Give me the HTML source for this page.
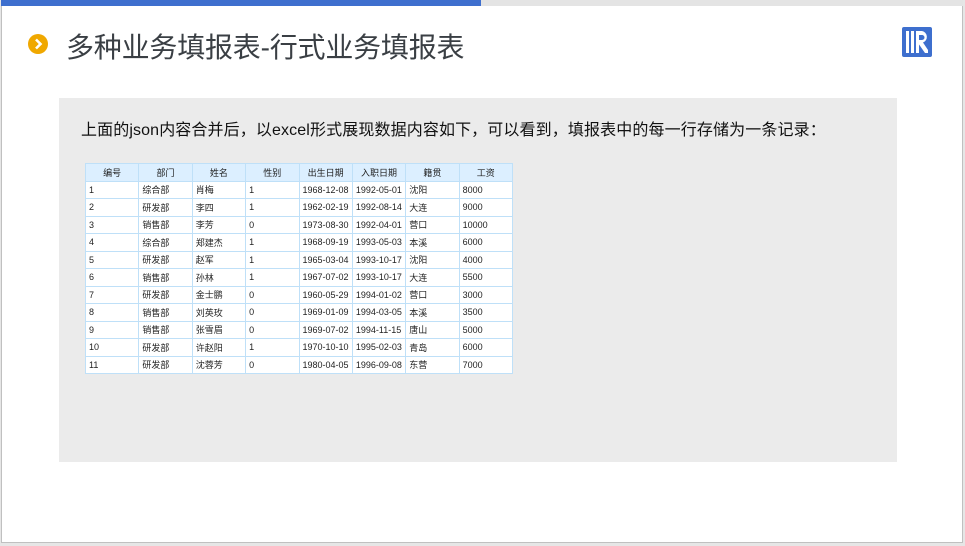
<!DOCTYPE html>
<html><head><meta charset="utf-8"><style>
*{margin:0;padding:0;box-sizing:border-box}
body{width:965px;height:546px;background:#e6e6e6;position:relative;overflow:hidden;font-family:"Liberation Sans","Noto Sans CJK SC",sans-serif}
.slide{position:absolute;left:1px;top:0;width:962px;height:543px;background:#fff;border:1px solid #c0c0c0;border-top:none}
.bar{position:absolute;left:1px;top:0;width:480px;height:6px;background:#3e6fce}
.bar2{position:absolute;left:481px;top:0;width:482px;height:6px;background:#e4e4e4}
.dot{position:absolute;left:28px;top:34px;width:20px;height:20px;border-radius:50%;background:#f0a800}
.title{position:absolute;left:66px;top:26px;font-size:28px;color:#3a3f44;white-space:nowrap;letter-spacing:-0.2px}
.panel{position:absolute;left:59px;top:98px;width:838px;height:364px;background:#ebebeb}
.txt{position:absolute;left:81px;top:116px;font-size:16px;color:#111;white-space:nowrap;letter-spacing:0.12px}
table{position:absolute;left:85px;top:163px;width:428px;table-layout:fixed;border-collapse:collapse;background:#fff;font-family:"Liberation Sans","WenQuanYi Zen Hei",sans-serif;font-size:9px;color:#222}
td{border:1px solid #bfe0f8;height:17.5px;padding:0 3px;white-space:nowrap;overflow:hidden}
tr.h td{background:#dcefff;text-align:center}
</style></head><body>
<div class="slide"></div>
<div class="bar"></div><div class="bar2"></div>
<div class="dot"><svg width="20" height="20" viewBox="0 0 20 20"><path d="M8 5.5 L12.5 10 L8 14.5" stroke="#fff" stroke-width="2.6" fill="none"/></svg></div>
<div class="title">多种业务填报表-行式业务填报表</div>
<svg style="position:absolute;left:902px;top:27px" width="30" height="30" viewBox="0 0 30 30">
<rect x="0" y="0" width="30" height="30" rx="2" fill="#3e6fce"/>
<rect x="4" y="4" width="3" height="22" fill="#fff"/>
<rect x="9" y="4" width="3" height="22" fill="#fff"/>
<path d="M14 4 H20 A6 6 0 0 1 21 15.5 L26 23 V26 H23 L16 16 V13 H20 A2.5 2.5 0 0 0 20 8 H17 V26 H14 Z" fill="#fff"/>
</svg>
<div class="panel"></div>
<div class="txt">上面的json内容合并后，以excel形式展现数据内容如下，可以看到，填报表中的每一行存储为一条记录：</div>
<table>
<tr class="h"><td>编号</td><td>部门</td><td>姓名</td><td>性别</td><td>出生日期</td><td>入职日期</td><td>籍贯</td><td>工资</td></tr>
<tr><td>1</td><td>综合部</td><td>肖梅</td><td>1</td><td>1968-12-08</td><td>1992-05-01</td><td>沈阳</td><td>8000</td></tr>
<tr><td>2</td><td>研发部</td><td>李四</td><td>1</td><td>1962-02-19</td><td>1992-08-14</td><td>大连</td><td>9000</td></tr>
<tr><td>3</td><td>销售部</td><td>李芳</td><td>0</td><td>1973-08-30</td><td>1992-04-01</td><td>营口</td><td>10000</td></tr>
<tr><td>4</td><td>综合部</td><td>郑建杰</td><td>1</td><td>1968-09-19</td><td>1993-05-03</td><td>本溪</td><td>6000</td></tr>
<tr><td>5</td><td>研发部</td><td>赵军</td><td>1</td><td>1965-03-04</td><td>1993-10-17</td><td>沈阳</td><td>4000</td></tr>
<tr><td>6</td><td>销售部</td><td>孙林</td><td>1</td><td>1967-07-02</td><td>1993-10-17</td><td>大连</td><td>5500</td></tr>
<tr><td>7</td><td>研发部</td><td>金士鹏</td><td>0</td><td>1960-05-29</td><td>1994-01-02</td><td>营口</td><td>3000</td></tr>
<tr><td>8</td><td>销售部</td><td>刘英玫</td><td>0</td><td>1969-01-09</td><td>1994-03-05</td><td>本溪</td><td>3500</td></tr>
<tr><td>9</td><td>销售部</td><td>张雪眉</td><td>0</td><td>1969-07-02</td><td>1994-11-15</td><td>唐山</td><td>5000</td></tr>
<tr><td>10</td><td>研发部</td><td>许赵阳</td><td>1</td><td>1970-10-10</td><td>1995-02-03</td><td>青岛</td><td>6000</td></tr>
<tr><td>11</td><td>研发部</td><td>沈蓉芳</td><td>0</td><td>1980-04-05</td><td>1996-09-08</td><td>东营</td><td>7000</td></tr>
</table>
</body></html>
